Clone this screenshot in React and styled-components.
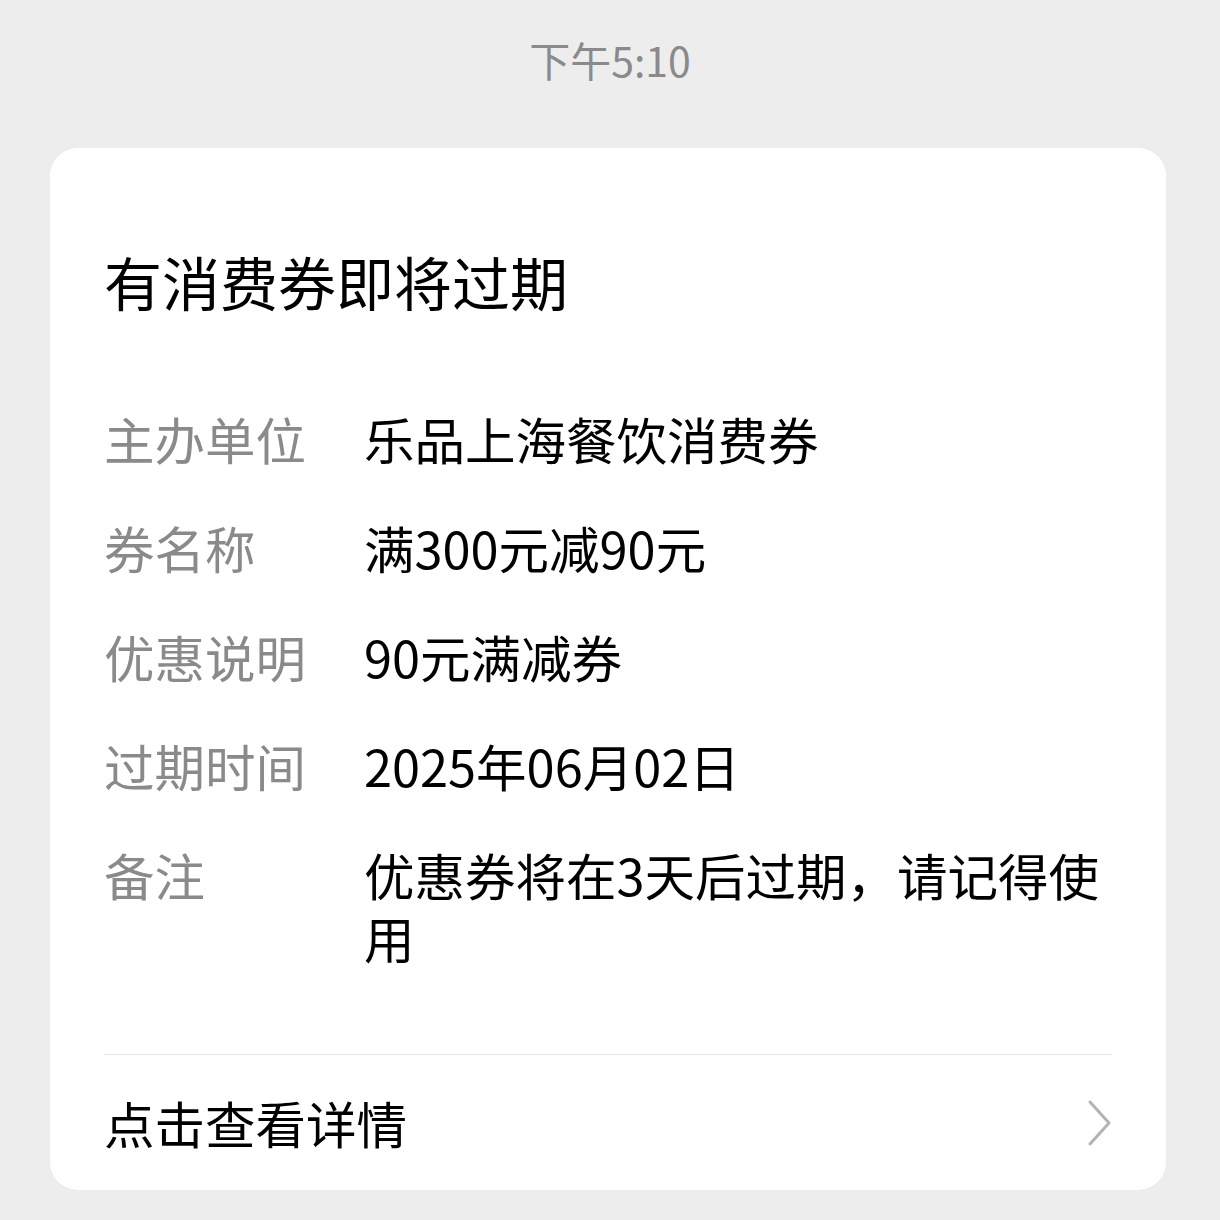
import React from 'react'
import styled, { createGlobalStyle } from 'styled-components'

const GlobalStyle = createGlobalStyle`
  html, body {
    margin: 0;
    padding: 0;
    background: #ededed;
  }
  body {
    font-family: "Noto Sans CJK SC", "Noto Sans", sans-serif;
    -webkit-font-smoothing: antialiased;
  }
`

const Page = styled.div`
  width: 1220px;
  min-height: 1220px;
  box-sizing: border-box;
  padding-bottom: 30px;
`

const StatusBar = styled.div`
  height: 118px;
  padding-bottom: 2px;
  display: flex;
  align-items: center;
  justify-content: center;
  font-size: 41px;
  line-height: 1;
  color: #8a8a8a;
`

const Card = styled.div`
  width: 1116px;
  margin: 28px 0 0 50px;
  box-sizing: border-box;
  background: #ffffff;
  border-radius: 28px;
  padding: 93px 54px 0 54px;
`

const Title = styled.h1`
  margin: 0 0 86px 0;
  font-size: 58px;
  line-height: 80px;
  font-weight: 400;
  color: #000000;
`

const InfoList = styled.div`
  display: flex;
  flex-direction: column;
  gap: 46px;
`

const InfoRow = styled.div`
  display: grid;
  grid-template-columns: 260px 1fr;
  font-size: 50.5px;
  line-height: 63px;
`

const Label = styled.div`
  color: #8a8a8a;
`

const Value = styled.div`
  color: #000000;
`

const Divider = styled.div`
  height: 1px;
  margin-top: 85px;
  background: #e6e6e6;
`

const LinkRow = styled.div`
  height: 135px;
  display: flex;
  align-items: center;
  justify-content: space-between;
  font-size: 50.5px;
  line-height: 63px;
  color: #000000;
  cursor: pointer;
`

const Chevron = styled.svg`
  width: 26px;
  height: 48px;
`

const rows = [
  { label: '主办单位', value: '乐品上海餐饮消费券' },
  { label: '券名称', value: '满300元减90元' },
  { label: '优惠说明', value: '90元满减券' },
  { label: '过期时间', value: '2025年06月02日' },
  { label: '备注', value: '优惠券将在3天后过期，请记得使用' }
]

const App = () => {
  return (
    <Page>
      <GlobalStyle />
      <StatusBar>下午5:10</StatusBar>
      <Card>
        <Title>有消费券即将过期</Title>
        <InfoList>
          {rows.map(row => (
            <InfoRow key={row.label}>
              <Label>{row.label}</Label>
              <Value>{row.value}</Value>
            </InfoRow>
          ))}
        </InfoList>
        <Divider />
        <LinkRow>
          <span>点击查看详情</span>
          <Chevron viewBox="0 0 26 48">
            <polyline
              points="4,3 23,24 4,45"
              fill="none"
              stroke="#b3b3b3"
              strokeWidth="3"
              strokeLinecap="round"
              strokeLinejoin="round"
            />
          </Chevron>
        </LinkRow>
      </Card>
    </Page>
  )
}

export default App
